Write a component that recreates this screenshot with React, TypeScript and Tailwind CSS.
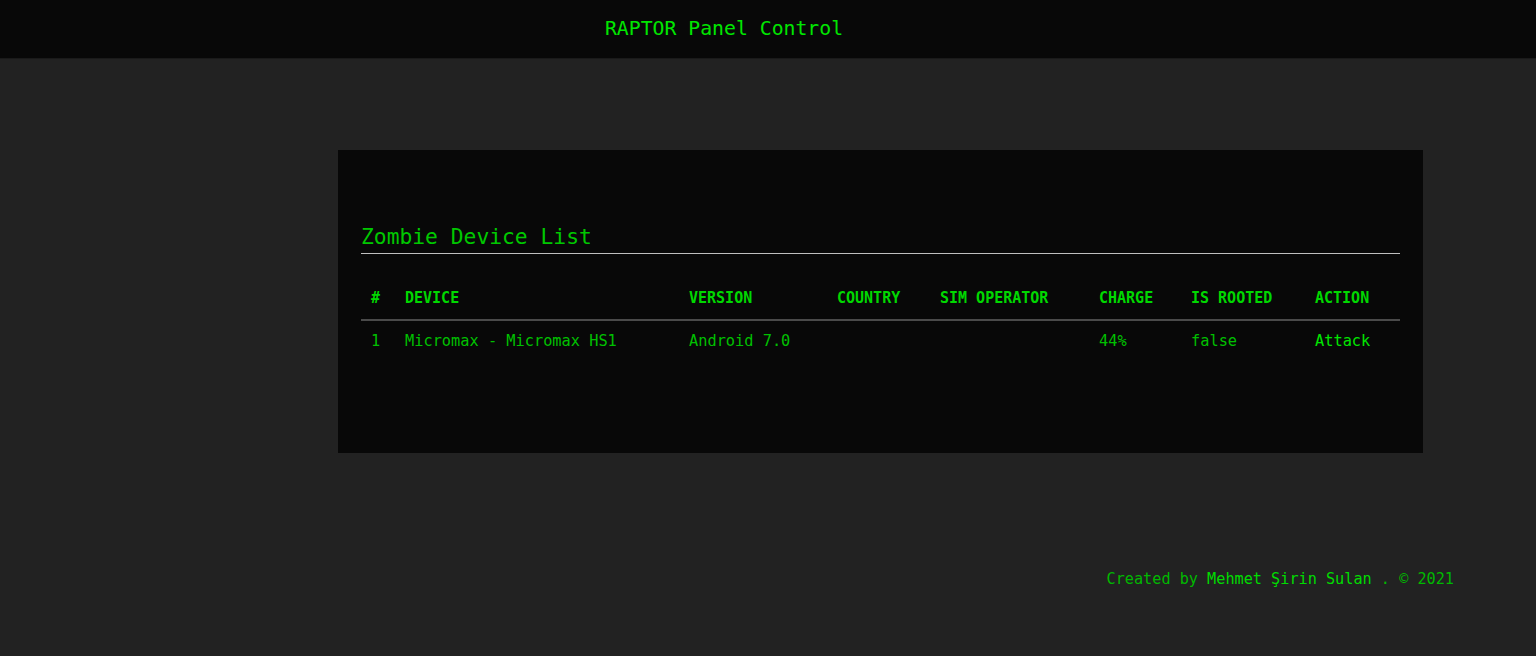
import React from "react";

const mono = { fontFamily: '"DejaVu Sans Mono", "Liberation Mono", monospace' };

export default function App() {
  const cols = [
    { label: "#", w: "w-[34px]" },
    { label: "DEVICE", w: "w-[284px]" },
    { label: "VERSION", w: "w-[148px]" },
    { label: "COUNTRY", w: "w-[103px]" },
    { label: "SIM OPERATOR", w: "w-[159px]" },
    { label: "CHARGE", w: "w-[92px]" },
    { label: "IS ROOTED", w: "w-[124px]" },
    { label: "ACTION", w: "" },
  ];
  const row = ["1", "Micromax - Micromax HS1", "Android 7.0", "", "", "44%", "false"];
  return (
    <div className="min-h-[656px] bg-[#222222]" style={mono}>
      <header className="h-[59px] bg-[#080808] border-b border-[#1a1a1a] flex items-center justify-center">
        <span className="text-[19.8px] text-[#00e600] pr-[88px]">RAPTOR Panel Control</span>
      </header>
      <div className="pl-[338px] pr-[113px] pt-[91px]">
        <div className="bg-[#080808] h-[303px] px-[23px] pt-[74px]">
          <h2 className="text-[21.3px] leading-[26px] text-[#00c800] pb-[3px] border-b border-[#bfbfbf]">
            Zombie Device List
          </h2>
          <table className="w-full mt-[27px] border-collapse text-[15.3px]">
            <thead>
              <tr className="border-b-2 border-[#4a4a4a]">
                {cols.map((c) => (
                  <th
                    key={c.label}
                    className={`${c.w} text-left font-bold text-[15px] text-[#00d800] pl-[10px] pt-[6px] pb-[9px] whitespace-nowrap`}
                  >
                    {c.label}
                  </th>
                ))}
              </tr>
            </thead>
            <tbody>
              <tr>
                {row.map((v, i) => (
                  <td key={i} className="pl-[10px] pt-[9px] pb-[10px] text-[#00c000] whitespace-nowrap">
                    {v}
                  </td>
                ))}
                <td className="pl-[10px] pt-[9px] pb-[10px] text-[#00e600] whitespace-nowrap">Attack</td>
              </tr>
            </tbody>
          </table>
        </div>
      </div>
      <footer className="flex justify-end pr-[82px] pt-[115px] text-[15.2px] text-[#00b800]">
        <span>
          Created by <span className="text-[#00dc00]">Mehmet Şirin Sulan</span> . © 2021
        </span>
      </footer>
    </div>
  );
}
